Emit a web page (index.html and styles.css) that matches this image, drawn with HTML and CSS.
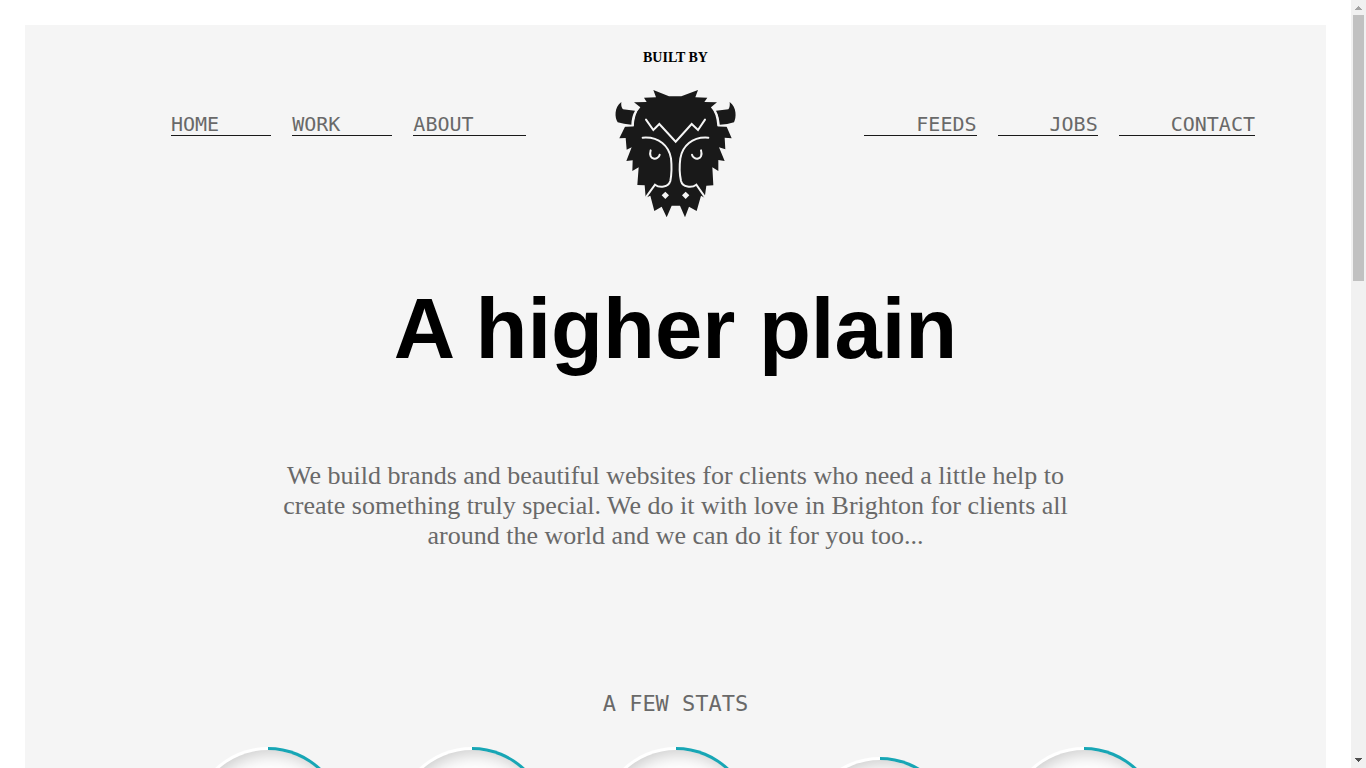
FILE: index.html
```html
<!DOCTYPE html>
<html lang="en">
<head>
<meta charset="utf-8">
<title>A higher plain</title>
<link rel="stylesheet" href="styles.css">
</head>
<body>
<div class="viewport">
<div class="page">
  <header class="masthead">
    <p class="tagline">BUILT BY</p>
    <div class="bar">
      <nav class="menu menu-left" aria-label="Primary">
        <a href="#home">HOME</a>
        <a href="#work">WORK</a>
        <a href="#about">ABOUT</a>
      </nav>
      <a class="logo" href="#home" aria-label="Buffalo">
        <svg viewBox="3 0 420 435" aria-hidden="true">
          <g fill="#191919">
            <path d="M145 30 192 49H229L279 30 271 52 307 53 298 66 336 67 318 82Q334 98 337 139L365 140 380 175 359 173 361 208 342 202 359 243 340 240 340 273 322 262 325 316 304 317 299 353 288 347 275 393 252 380 240 412 225 377H200L185 412 170 380 148 393 136 347 122 353 119 316 97 315 101 262 82 273 83 241 64 243 80 202 65 209 62 174 43 175 60 140 86 139Q88 100 106 82L87 67 125 66 117 53 153 52Z"/>
            <path d="M49 66C27 82 29 113 38 127Q56 132 79 134 80 108 90 92L54 88Q47 82 49 66Z"/>
            <path d="M374 66C396 82 394 113 387 127Q368 134 344 134 342 108 333 92L370 88Q376 82 374 66Z"/>
          </g>
          <g fill="none" stroke="#f5f5f5" stroke-width="6" stroke-linecap="round">
            <path d="M103 82Q85 98 84 137L59 137M320 82Q340 100 341 137L366 137" stroke-width="4" stroke-linecap="butt"/>
            <path d="M123 119 145 150 163 132 212 185 260 132 279 150 300 119"/>
            <path d="M113 173C163 169 192 199 198 235Q202 271 196 303C190 322 164 325 150 314L122 353"/>
            <path d="M310 173C261 169 232 199 226 235Q221 271 228 303C233 322 260 325 274 314L301 353"/>
            <path d="M137 211C128 241 160 242 164 224M288 211C297 241 265 242 261 224"/>
          </g>
          <path fill="#f5f5f5" d="M181 335 192 346 181 357 170 346ZM242 335 253 346 242 357 231 346Z"/>
        </svg>
      </a>
      <nav class="menu menu-right" aria-label="Secondary">
        <a href="#feeds">FEEDS</a>
        <a href="#jobs">JOBS</a>
        <a href="#contact">CONTACT</a>
      </nav>
    </div>
  </header>
  <main>
    <h1>A higher plain</h1>
    <p class="intro">We build brands and beautiful websites for clients who need a little help to create something truly special. We do it with love in Brighton for clients all around the world and we can do it for you too...</p>
    <section class="stats">
      <h2>A FEW STATS</h2>
      <div class="dials">
        <div class="dial"></div>
        <div class="dial"></div>
        <div class="dial"></div>
        <div class="dial dial-low"></div>
        <div class="dial"></div>
      </div>
    </section>
  </main>
</div>
</div>
<div class="scrollbar" aria-hidden="true">
  <svg class="arrow" viewBox="0 0 15 15" shape-rendering="crispEdges"><path fill="#a3a3a3" d="M7 6h1v1h1v1h1v1h1v1H4V9h1V8h1V7h1z"/></svg>
  <div class="track"><div class="thumb"></div></div>
  <svg class="arrow" viewBox="0 0 15 15" shape-rendering="crispEdges"><path fill="#505050" d="M4 5h7v1h-1v1H9v1H8v1H7V8H6V7H5V6H4z"/></svg>
</div>
</body>
</html>
```
FILE: styles.css
```css
* { box-sizing: border-box; }
body { display: flex; height: 100vh; margin: 0; overflow: hidden; background: #fff; }
h1, h2, p { margin: 0; font-weight: normal; }
.viewport { flex: 1; padding: 25px; overflow: hidden; }
.page { padding: 25px 0; background: #f5f5f5; text-align: center; }
.tagline { font: bold 14px/16px "Liberation Serif", serif; color: #000; }
.bar { display: grid; grid-template-columns: 1fr 140px 1fr; padding-top: 14px; }
.logo svg { display: block; width: 100%; }
.menu { display: flex; gap: 21px; align-items: flex-start; padding-top: 33px; }
.menu a { border-bottom: 1px solid #191919; color: #696969; font: 20px/22px "DejaVu Sans Mono", monospace; text-decoration: none; }
.menu-left { padding-left: 146px; }
.menu-left a { padding-right: 52px; }
.menu-right { justify-content: flex-end; padding-right: 71px; }
.menu-right a { padding-left: 52px; }
h1 { margin-top: 56px; color: #000; font: bold 85px/96px "Liberation Sans", sans-serif; }
.intro { max-width: 800px; margin: 84px auto 0; color: #696969; font: 26px/30px "Liberation Serif", serif; }
.stats { margin-top: 140px; }
.stats h2 { color: #696969; font: 22px/26px "DejaVu Sans Mono", monospace; }
.dials { display: flex; justify-content: center; gap: 50px; padding-top: 30px; }
.dial { width: 154px; height: 154px; padding: 3px; border-radius: 50%; background: conic-gradient(#17a6b5 50%, #fff 50%); }
.dial::before { content: ""; display: block; height: 100%; border-radius: 50%; background: #fff; box-shadow: inset 3px 3px 18px rgba(0, 0, 0, 0.22); }
.dial-low { margin-top: 10px; }
.scrollbar { display: flex; flex-direction: column; width: 15px; background: #f1f1f1; }
.arrow { display: block; width: 15px; height: 15px; }
.track { flex: 1; padding: 0 2px; }
.thumb { height: 36%; background: #c1c1c1; }
```
